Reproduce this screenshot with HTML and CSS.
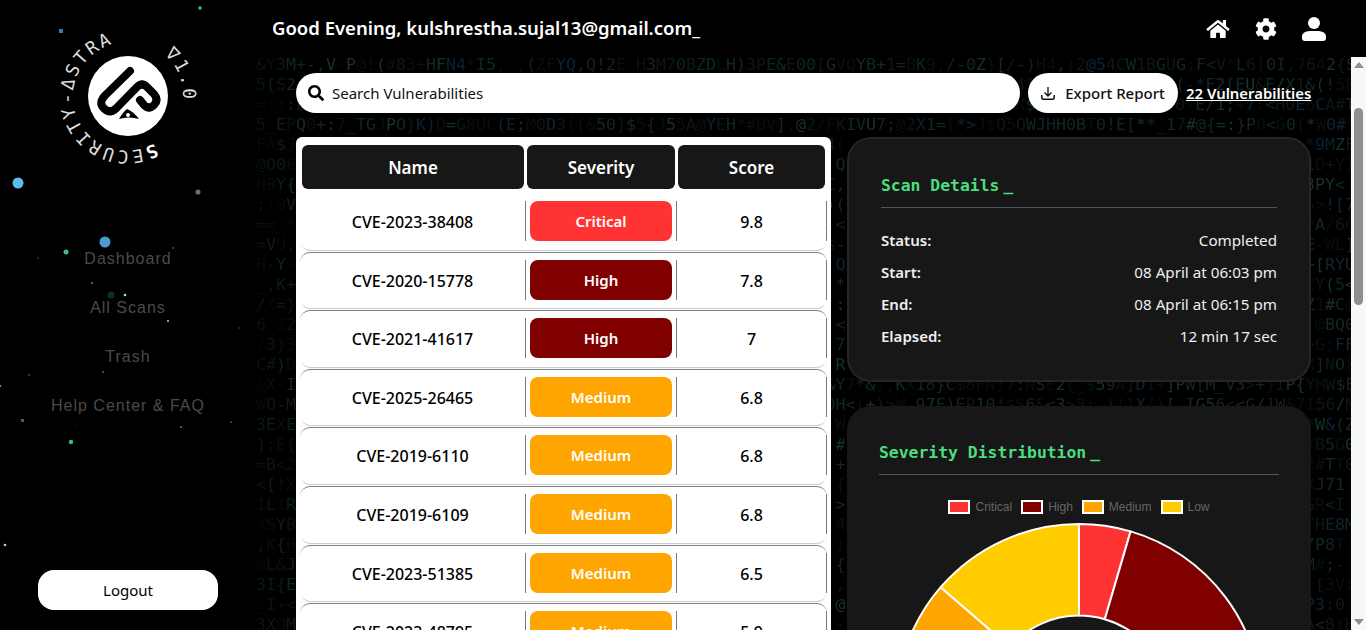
FILE: index.html
```html
<!DOCTYPE html>
<html lang="en">
<head>
<meta charset="utf-8">
<title>Security-Astra</title>
<link rel="stylesheet" href="styles.css">
</head>
<body>
<div class="app">
  <svg class="stars" viewBox="0 0 256 630" aria-hidden="true">
    <circle cx="18" cy="183" r="5.5" fill="#5bbcf0"/><circle cx="105" cy="242" r="5.5" fill="#4a9ecf"/>
    <circle cx="66" cy="252" r="2.5" fill="#3bbf80"/><circle cx="198" cy="192" r="2.5" fill="#5a7a70"/>
    <rect x="59" y="29" width="4" height="4" fill="#2a80b0"/><circle cx="200" cy="8" r="1.8" fill="#2fbf80"/>
    <circle cx="111" cy="295" r="3.5" fill="#0f2f22"/><circle cx="125" cy="295" r="1.3" fill="#9fe4ff"/>
    <circle cx="168" cy="321" r="1" fill="#8dd8ff"/><circle cx="92" cy="283" r=".8" fill="#8dd8ff"/>
    <circle cx="38" cy="258" r=".8" fill="#375f50"/><circle cx="173" cy="248" r=".8" fill="#3bb080"/>
    <circle cx="239" cy="328" r=".8" fill="#375f50"/><circle cx="103" cy="372" r=".7" fill="#8dd8ff"/>
    <circle cx="29" cy="375" r=".8" fill="#3ba080"/><circle cx="0" cy="386" r="1.2" fill="#3bb070"/>
    <rect x="21" y="419" width="3" height="3" fill="#2f6f50"/><circle cx="77" cy="426" r=".6" fill="#255540"/>
    <circle cx="181" cy="427" r="1" fill="#4f8a70"/><circle cx="231" cy="422" r=".6" fill="#fff"/>
    <circle cx="71" cy="442" r="2.2" fill="#3bbf80"/><circle cx="5" cy="545" r="1.3" fill="#8dd8ff"/>
  </svg>

  <aside class="sidebar">
    <svg class="logo" viewBox="0 0 256 190" role="img" aria-label="Security-Astra logo">
      <defs><path id="ring" d="M154.200 143.200A54 54 0 1 1 101.800 48.800A54 54 0 1 1 154.200 143.200"/></defs>
      <circle cx="128" cy="96" r="40" fill="#fff"/>
      <path class="logo-mark" d="M130 71 105 95.500Q98 103 104 108.500 110 114 116 108.500L137 87Q142 82 147 87L154 94Q159 100 154 105 149 110 144 105L140 100"/>
      <path d="M119 119Q123 112 127 109 134 112 139 119 129 116 119 119Z" fill="#000"/>
      <circle cx="128" cy="115" r="2" fill="#fff"/>
      <text class="ring-text"><textPath href="#ring" xml:space="preserve"><tspan class="ring-first">S</tspan>ECURITY-ΔSTRA    ∇1.0</textPath></text>
    </svg>
    <nav class="nav">
      <a class="nav-item">Dashboard</a>
      <a class="nav-item">All Scans</a>
      <a class="nav-item">Trash</a>
      <a class="nav-item">Help Center &amp; FAQ</a>
    </nav>
    <button class="logout">Logout</button>
  </aside>

  <div class="main">
    <header class="topbar">
      <h1 class="greeting">Good Evening, kulshrestha.sujal13@gmail.com_</h1>
      <div class="top-icons">
        <svg class="icon-home" viewBox="-12 0 600 512" fill="#fff"><path d="M280.37 148.26L96 300.11V464a16 16 0 0 0 16 16l112.06-.29a16 16 0 0 0 15.92-16V368a16 16 0 0 1 16-16h64a16 16 0 0 1 16 16v95.64a16 16 0 0 0 16 16.05L464 480a16 16 0 0 0 16-16V300L295.67 148.26a12.19 12.19 0 0 0-15.3 0zM571.6 251.47L488 182.56V44.05a12 12 0 0 0-12-12h-56a12 12 0 0 0-12 12v72.61L318.47 43a48 48 0 0 0-61 0L4.34 251.47a12 12 0 0 0-1.6 16.9l25.5 31A12 12 0 0 0 45.15 301l235.22-193.74a12.19 12.19 0 0 1 15.3 0L530.9 301a12 12 0 0 0 16.9-1.6l25.5-31a12 12 0 0 0-1.7-16.93z"/></svg>
        <svg class="icon-gear" viewBox="-22 -22 556 556" fill="#fff"><path d="M487.4 315.7l-42.6-24.6c4.3-23.2 4.3-47 0-70.2l42.6-24.6c4.9-2.8 7.1-8.6 5.5-14-11.1-35.6-30-67.8-54.7-94.6-3.8-4.1-10-5.1-14.8-2.3L380.8 110c-17.9-15.4-38.5-27.3-60.8-35.1V25.8c0-5.6-3.9-10.5-9.4-11.7-36.7-8.2-74.3-7.8-109.2 0-5.5 1.2-9.4 6.1-9.4 11.7V75c-22.2 7.9-42.8 19.8-60.8 35.1L88.7 85.5c-4.9-2.8-11-1.9-14.8 2.3-24.7 26.7-43.6 58.9-54.7 94.6-1.7 5.4.6 11.2 5.5 14L67.3 221c-4.3 23.2-4.3 47 0 70.2l-42.6 24.6c-4.9 2.8-7.1 8.6-5.5 14 11.1 35.6 30 67.8 54.7 94.6 3.8 4.1 10 5.1 14.8 2.3l42.6-24.6c17.9 15.4 38.5 27.3 60.8 35.1v49.2c0 5.6 3.9 10.5 9.4 11.7 36.7 8.2 74.3 7.8 109.2 0 5.5-1.2 9.4-6.1 9.4-11.7v-49.2c22.2-7.9 42.8-19.8 60.8-35.1l42.6 24.6c4.9 2.8 11 1.9 14.8-2.3 24.7-26.7 43.6-58.9 54.7-94.6 1.5-5.5-.7-11.3-5.6-14.1zM256 336c-44.1 0-80-35.9-80-80s35.9-80 80-80 80 35.9 80 80-35.9 80-80 80z"/></svg>
        <svg class="icon-user" viewBox="0 0 24 24" fill="#fff"><circle cx="12" cy="6" r="6"/><path d="M7.500 14h9a7.500 5.500 0 0 1 7.500 5.500V21a3 3 0 0 1-3 3H3a3 3 0 0 1-3-3v-1.500A7.500 5.500 0 0 1 7.500 14z"/></svg>
      </div>
    </header>

    <div class="body">
      <div class="scroller">
        <div class="matrix" id="matrix" aria-hidden="true"></div>
        <div class="content">
          <div class="toolbar">
            <label class="search">
              <svg class="search-icon" viewBox="0 0 512 512"><path d="M505 442.7L405.3 343c-4.500-4.500-10.600-7-17-7H372c27.600-35.300 44-79.700 44-128C416 93.100 322.900 0 208 0S0 93.100 0 208s93.100 208 208 208c48.300 0 92.700-16.400 128-44v16.300c0 6.400 2.500 12.500 7 17l99.700 99.700c9.400 9.400 24.600 9.400 33.900 0l28.300-28.300c9.400-9.400 9.400-24.600.1-34zM208 336c-70.700 0-128-57.200-128-128 0-70.700 57.200-128 128-128 70.700 0 128 57.200 128 128 0 70.700-57.200 128-128 128z"/></svg>
              <span class="search-text">Search Vulnerabilities</span>
            </label>
            <button class="export">
              <svg class="export-icon" viewBox="0 0 14 14"><path d="M7 1v8.500M3.500 6.500 7 10l3.500-3.500" fill="none" stroke="#111" stroke-width="1.300"/><path d="M.8 9v2.700c0 .9.600 1.500 1.500 1.500h9.400c.9 0 1.500-.6 1.500-1.500V9" fill="none" stroke="#111" stroke-width="1.500"/></svg>
              Export Report
            </button>
            <a class="count">22 Vulnerabilities</a>
          </div>

          <div class="columns">
            <section class="table">
              <div class="thead">
                <div class="th">Name</div><div class="th">Severity</div><div class="th">Score</div>
              </div>
              <div class="tr tr-first"><div class="td">CVE-2023-38408</div><div class="td"><span class="badge critical">Critical</span></div><div class="td">9.8</div></div>
              <div class="tr"><div class="td">CVE-2020-15778</div><div class="td"><span class="badge high">High</span></div><div class="td">7.8</div></div>
              <div class="tr"><div class="td">CVE-2021-41617</div><div class="td"><span class="badge high">High</span></div><div class="td">7</div></div>
              <div class="tr"><div class="td">CVE-2025-26465</div><div class="td"><span class="badge medium">Medium</span></div><div class="td">6.8</div></div>
              <div class="tr"><div class="td">CVE-2019-6110</div><div class="td"><span class="badge medium">Medium</span></div><div class="td">6.8</div></div>
              <div class="tr"><div class="td">CVE-2019-6109</div><div class="td"><span class="badge medium">Medium</span></div><div class="td">6.8</div></div>
              <div class="tr"><div class="td">CVE-2023-51385</div><div class="td"><span class="badge medium">Medium</span></div><div class="td">6.5</div></div>
              <div class="tr"><div class="td">CVE-2023-48795</div><div class="td"><span class="badge medium">Medium</span></div><div class="td">5.9</div></div>
            </section>

            <div class="side">
              <section class="card card-details">
                <h2 class="card-title">Scan Details<span class="cursor">_</span></h2>
                <dl class="details">
                  <div class="detail"><dt>Status:</dt><dd>Completed</dd></div>
                  <div class="detail"><dt>Start:</dt><dd>08 April at 06:03 pm</dd></div>
                  <div class="detail"><dt>End:</dt><dd>08 April at 06:15 pm</dd></div>
                  <div class="detail"><dt>Elapsed:</dt><dd>12 min 17 sec</dd></div>
                </dl>
              </section>
              <section class="card card-chart">
                <h2 class="card-title">Severity Distribution<span class="cursor">_</span></h2>
                <div class="legend">
                  <span class="legend-item"><i class="swatch critical"></i>Critical</span>
                  <span class="legend-item"><i class="swatch high"></i>High</span>
                  <span class="legend-item"><i class="swatch medium"></i>Medium</span>
                  <span class="legend-item"><i class="swatch low"></i>Low</span>
                </div>
                <svg class="donut" viewBox="0 0 400 380">
                  <g stroke="#fff" stroke-width="2" stroke-linejoin="round">
                    <path fill="#ff3333" d="M200 3A183 183 0 0 1 251.600 10.400L225.800 98.200A91.500 91.500 0 0 0 200 94.500Z"/>
                    <path fill="#800000" d="M251.600 10.400A183 183 0 0 1 251.600 361.600L225.800 273.800A91.500 91.500 0 0 0 225.800 98.200Z"/>
                    <path fill="#ffa500" d="M251.600 361.600A183 183 0 0 1 61.700 66.200L130.900 126.100A91.500 91.500 0 0 0 225.800 273.800Z"/>
                    <path fill="#ffcc00" d="M61.700 66.200A183 183 0 0 1 200 3V94.500A91.500 91.500 0 0 0 130.900 126.100Z"/>
                  </g>
                </svg>
              </section>
            </div>
          </div>
        </div>
      </div>
      <div class="rail" aria-hidden="true">
        <span class="arrow-up"></span>
        <span class="thumb"></span>
        <span class="arrow-down"></span>
      </div>
    </div>
  </div>
</div>
<script src="matrix.js"></script>
</body>
</html>
```
FILE: styles.css
```css
* { box-sizing: border-box; }
html, body { margin: 0; height: 100%; overflow: hidden; background: #000; }
body { font-family: "Noto Sans", "Open Sans", sans-serif; color: #fff; }

.app { position: relative; display: flex; height: 630px; width: 1366px; background: #000; }
.stars { position: absolute; left: 0; top: 0; width: 256px; height: 630px; }

/* sidebar */
.sidebar { position: relative; flex: 0 0 256px; display: flex; flex-direction: column; align-items: center; padding-bottom: 20px; }
.logo { display: block; width: 256px; height: 190px; flex: none; }
.logo-mark { fill: none; stroke: #000; stroke-width: 8; stroke-linecap: round; stroke-linejoin: round; }
.ring-text { font: 18px "DejaVu Sans Mono", monospace; letter-spacing: 2.4px; fill: #ddd; white-space: pre; }
.ring-first { font-weight: 700; fill: #fff; }
.nav { display: flex; flex-direction: column; align-items: center; gap: 25px; margin-top: 57px; }
.nav-item { font: 16px/24px "Liberation Sans", Arial, sans-serif; letter-spacing: 1px; color: #4a4a4a; }
.logout { margin-top: auto; width: 180px; height: 40px; border: 0; border-radius: 16px; background: #fff; color: #000; font: 15px "Noto Sans", sans-serif; }

/* top bar */
.main { flex: 1; min-width: 0; display: flex; flex-direction: column; }
.topbar { flex: 0 0 57px; display: flex; align-items: center; justify-content: space-between; padding: 0 40px 0 16px; }
.greeting { margin: 0 0 2px; font-size: 18.5px; font-weight: 600; line-height: 24px; }
.top-icons { display: flex; align-items: center; gap: 24px; }
.icon-home { width: 24px; height: 22px; }
.icon-gear { width: 24px; height: 24px; }
.icon-user { width: 24px; height: 24px; }

/* scroll area */
.body { flex: 1; min-height: 0; display: flex; }
.scroller { position: relative; flex: 1; min-width: 0; overflow: hidden; }
.matrix { position: absolute; left: 0; top: -2px; width: 1095px; font: 16.6px/20px "DejaVu Sans Mono", monospace; white-space: pre; opacity: .85; -webkit-mask-image: linear-gradient(to right, rgba(0,0,0,.45), #000 60px); mask-image: linear-gradient(to right, rgba(0,0,0,.45), #000 60px); }
.matrix div { height: 20px; }
.m0 { color: #0b1212; }
.m1 { color: #101c1a; }
.m2 { color: #14302a; }
.m3 { color: #12293a; }
.m4 { color: #1a3d30; }
.content { position: relative; padding: 16px 40px 0; }

.toolbar { display: flex; align-items: center; gap: 8px; height: 40px; }
.search { flex: 0 0 724px; height: 40px; display: flex; align-items: center; gap: 8px; padding-left: 12px; border-radius: 20px; background: #fff; color: #111; }
.search-icon { width: 16px; height: 16px; }
.search-text { font-size: 15px; }
.export { flex: 0 0 150px; height: 40px; display: flex; align-items: center; justify-content: center; gap: 10px; border: 0; border-radius: 20px; background: #fff; color: #111; font: 500 15px "Noto Sans", sans-serif; padding: 0; }
.export-icon { width: 14px; height: 14px; }
.count { font-size: 14.9px; font-weight: 600; color: #fff; text-decoration: underline; white-space: nowrap; }

.columns { display: flex; gap: 16px; margin-top: 24px; align-items: flex-start; }

/* table */
.table { flex: 0 0 535px; background: #fff; border-radius: 6px; padding: 8px 4px 0; }
.thead { display: grid; grid-template-columns: 222px 148px 147px; gap: 3px; padding: 0 2px; margin-bottom: 4px; }
.th { height: 44px; display: flex; align-items: center; justify-content: center; background: #171717; border-radius: 6px; font-size: 17px; font-weight: 600; color: #fff; }
.tr { display: grid; grid-template-columns: 226px 151px 150px; height: 56.6px; margin-bottom: 2px; padding-top: 7px; border-top: 1px solid #7d828a; border-radius: 10px; box-shadow: 0 2px 1px -1px rgba(0,0,0,.22); }
.tr-first { border-top-color: transparent; }
.td { height: 40px; display: flex; align-items: center; justify-content: center; border-right: 1px solid #777; font-size: 16px; font-weight: 500; color: #000; padding: 2px 4px 0; }
.badge { width: 100%; height: 40px; margin-top: -2px; display: flex; align-items: center; justify-content: center; border-radius: 8px; font-size: 15px; font-weight: 600; color: #fff; }
.badge.critical { background: #ff3333; }
.badge.high { background: #800000; }
.badge.medium { background: #ffa500; }

/* cards */
.side { flex: 0 0 464px; display: flex; flex-direction: column; gap: 24px; }
.card { background: #171717; border-radius: 24px; padding: 32px; }
.card-details { height: 245px; border: 2px solid #252525; padding: 32px; }
.card-chart { height: 600px; }
.card-title { margin: 0; height: 37px; padding-top: 4px; border-bottom: 1px solid #4b5563; font: 700 16.4px/22px "DejaVu Sans Mono", monospace; color: #4ade80; }
.cursor { margin-left: 4px; }
.details { margin: 21px 0 0; display: flex; flex-direction: column; gap: 10px; }
.detail { display: flex; justify-content: space-between; height: 22px; align-items: center; font-size: 15px; }
.detail dt { font-weight: 600; color: #eee; }
.detail dd { margin: 0; color: #eee; font-size: 15.2px; }
.legend { display: flex; justify-content: center; gap: 9px; margin-top: 25px; height: 14px; }
.legend-item { display: flex; align-items: center; gap: 5px; font: 12px/14px "Liberation Sans", Arial, sans-serif; color: #666; }
.swatch { display: block; width: 22px; height: 14px; border: 2px solid #fff; }
.swatch.critical { background: #ff3333; }
.swatch.high { background: #800000; }
.swatch.medium { background: #ffa500; }
.swatch.low { background: #ffcc00; }
.donut { display: block; width: 400px; height: 380px; margin-top: 7px; }

/* scrollbar */
.rail { flex: 0 0 15px; display: flex; flex-direction: column; align-items: center; background: #f8f8f8; padding-top: 5px; }
.arrow-up { width: 0; height: 0; border: 5px solid transparent; border-top: 0; border-bottom: 6px solid #8f8f8f; }
.thumb { width: 9px; height: 197px; margin-top: 40px; background: #8f8f8f; border-radius: 5px; }
.arrow-down { width: 0; height: 0; margin-top: auto; margin-bottom: 5px; border: 5px solid transparent; border-bottom: 0; border-top: 6px solid #8f8f8f; }
```
FILE: matrix.js
```js
// Draws the decorative code rain behind the dashboard, one tinted span per glyph.
var rows = [
  [[0, "&Y3M+-,V-P@!(#83+HFN4*I5,_,(ZFYQ,Q!2E_H3M70BZDLH)3PE&E00[GVQYB+1=BK9,/-0Z}[/-)H4,)2@54CW1BGUG;F<V*L6[0I,7642{S"]],
  [[0, "5[S2"], [76, "41"], [92, "(-*F2[EU&E/X1&(!58"]],
  [[0, "=:::E"], [76, "K$"], [92, "0-E/1;+7:<H0E6CA#T"]],
  [[0, "5_EPQ0+:7_TGJPO}K)D=G8UC(E;M0D3([&50]$5{J55A@YEH*#BV],@2/FKIVU7;@2X1=[*>J$Q5QWJHH0BT0!E[**_17#@{=:}PO<G0[*W0#*"]],
  [[0, "FA$J"], [57, "4("], [105, "*9MZF"]],
  [[0, "@O0E"], [58, "Q"], [105, "1D+Y}"]],
  [[0, "N8Y{"], [57, "C,"], [105, "3PY<"]],
  [[0, ":(0V"], [57, ")("], [105, "6>![7"]],
  [[0, "==_*"], [57, ",<"], [105, "*A/6C"]],
  [[0, "=VU,"], [57, "$-"], [105, "E-WL]"]],
  [[0, "H-Y-"], [58, "Q"], [105, "+[RYU"]],
  [[0, "_,K+"], [58, "*"], [105, "CY(5<"]],
  [[0, "/X=}"], [58, ":"], [105, "Z1#C@"]],
  [[0, "6_Z2"], [58, "<"], [105, "!@BQ0"]],
  [[0, "73}3"], [58, "7"], [105, "+G;FF"]],
  [[0, "C#)D"], [58, "R"], [105, "X]NOX"]],
  [[0, "&X-I"], [57, "&Y7*&,,KX18}C$8FN;7:NSE2{_$59A]D1+]PW[M_V3>+}IP{YMW$E"]],
  [[0, "WO-M"], [57, "0H<(+)>W_97F)EP10*$S6&<3>8:_)!]X{}[_IG56<<G/]W&7I56/M"]],
  [[0, "3EXE"], [58, "W"], [105, "*W&(Z"]],
  [[0, "]:E{"], [58, "#"], [105, "YB5G0"]],
  [[0, "=B<2"], [58, "+"], [105, "*#TT0"]],
  [[0, "<[!X"], [58, "{"], [105, "XJ71"]],
  [[0, "1L1R"], [58, ">"], [105, "GR<I"]],
  [[0, "XSYB"], [58, "4"], [105, "THE8M"]],
  [[0, ",K{H"], [58, ";"], [105, "/P8T"]],
  [[0, "@L&J"], [58, "{"], [105, "M#;-"]],
  [[0, "3I{E"], [58, ","], [105, ",[3V:"]],
  [[0, "_I-<"], [58, "@"], [105, "P3:0"]],
  [[0, "3XQM"], [58, "-"], [105, "A<8)H"]]
];

var host = document.getElementById("matrix");
var seed = 7;
function next() {
  seed = (seed * 1103515245 + 12345) % 2147483648;
  return seed / 2147483648;
}
rows.forEach(function (segments) {
  var line = document.createElement("div");
  var column = 0;
  segments.forEach(function (segment) {
    line.appendChild(document.createTextNode(" ".repeat(segment[0] - column)));
    Array.from(segment[1]).forEach(function (glyph) {
      var span = document.createElement("span");
      var pick = next();
      span.className = pick < 0.25 ? "m0" : pick < 0.45 ? "m1" : pick < 0.68 ? "m2" : pick < 0.88 ? "m3" : "m4";
      span.textContent = glyph;
      line.appendChild(span);
    });
    column = segment[0] + segment[1].length;
  });
  host.appendChild(line);
});
```
